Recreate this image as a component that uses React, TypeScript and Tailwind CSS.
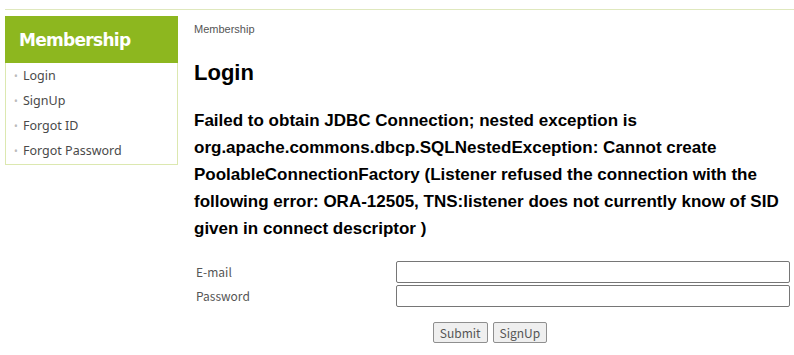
import React from "react"

const menu = ["Login", "SignUp", "Forgot ID", "Forgot Password"]

export default function App() {
  return (
    <div className="w-[794px] h-[355px] bg-white overflow-hidden pt-[9px] pl-[5px]">
      <div className="border-t border-[#dfe8bd]" />
      <div className="flex pt-[6px]">
        {/* sidebar */}
        <aside className="w-[173px] shrink-0">
          <div className="h-[47px] bg-[#8db71f] flex items-center pl-[14px] pt-[3px]">
            <span className="text-white font-bold text-[17px] font-['DejaVu_Sans',sans-serif] tracking-[-0.7px]">
              Membership
            </span>
          </div>
          <ul className="border border-t-0 border-[#dce8b0] pt-[1px] font-['Noto_Sans',sans-serif]">
            {menu.map((m) => (
              <li key={m} className="h-[25px] flex items-center pl-[8px] text-[12.5px] text-[#4a4a4a]">
                <span className="w-[9px] text-[#bbb] text-[10px]">•</span>
                {m}
              </li>
            ))}
          </ul>
        </aside>

        {/* main */}
        <main className="ml-[16px] w-[596px] font-['Liberation_Sans',Arial,sans-serif]">
          <p className="text-[11px] text-[#555] mt-[6px] leading-[14px]">Membership</p>
          <h2 className="text-[22px] font-bold text-black mt-[24px] leading-[26px]">Login</h2>
          <p className="text-[17px] font-bold text-black mt-[21px] leading-[27px]">
            Failed to obtain JDBC Connection; nested exception is
            org.apache.commons.dbcp.SQLNestedException: Cannot create PoolableConnectionFactory (Listener refused
            the connection with the following error: ORA-12505, TNS:listener does not currently know of SID given
            in connect descriptor )
          </p>

          <form className="mt-[18px] font-['Noto_Sans_CJK_KR','Noto_Sans',sans-serif] text-[12px] text-[#555]">
            <div className="flex items-center h-[24px]">
              <label className="w-[202px] pl-[2px]">E-mail</label>
              <input className="w-[394px] h-[22px] border border-[#767676] rounded-[2px] bg-white" />
            </div>
            <div className="flex items-center h-[24px]">
              <label className="w-[202px] pl-[2px]">Password</label>
              <input type="password" className="w-[394px] h-[22px] border border-[#767676] rounded-[2px] bg-white" />
            </div>
            <div className="flex justify-center gap-[5px] mt-[14px] pr-[4px]">
              <button type="button" className="h-[21px] px-[6px] border border-[#8f8f8f] rounded-[2px] bg-[#efefef] text-[12px] text-[#555]">
                Submit
              </button>
              <button type="button" className="h-[21px] px-[6px] border border-[#8f8f8f] rounded-[2px] bg-[#efefef] text-[12px] text-[#555]">
                SignUp
              </button>
            </div>
          </form>
        </main>
      </div>
    </div>
  )
}
